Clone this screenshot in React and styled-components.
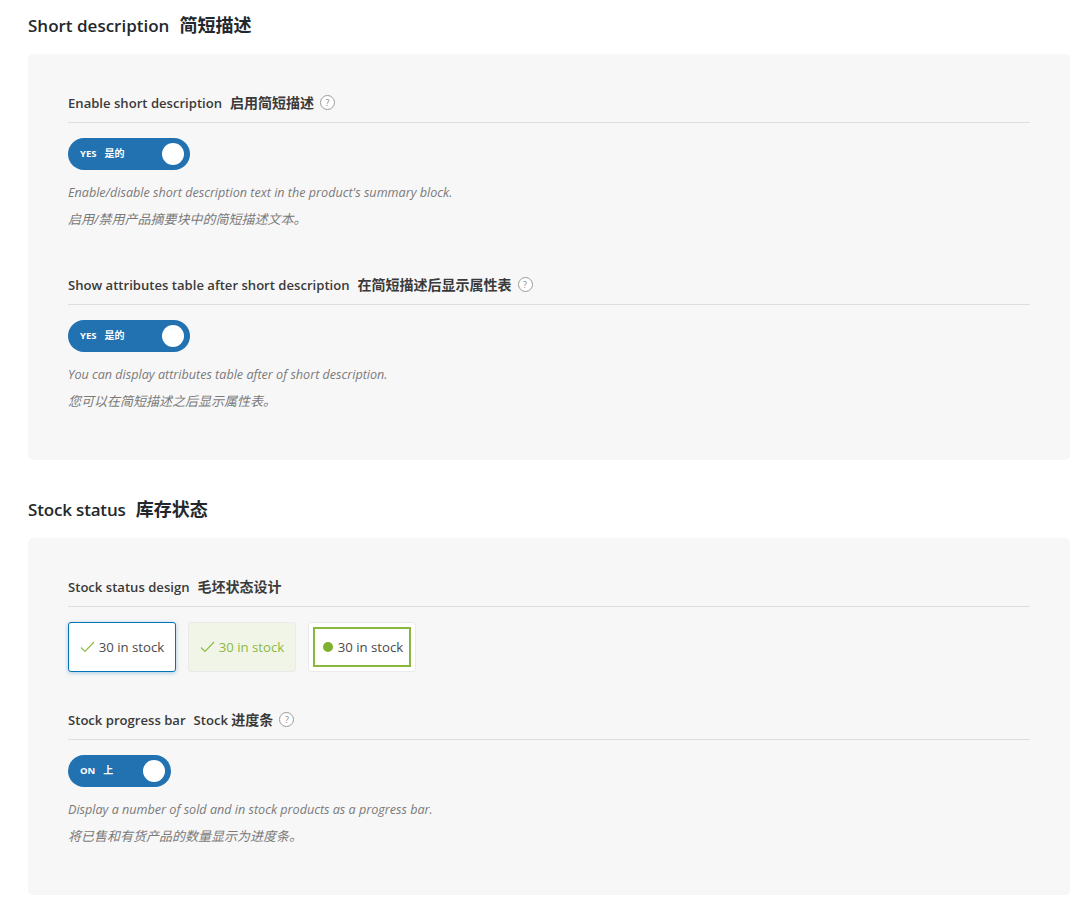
import React from 'react';
import styled, { createGlobalStyle } from 'styled-components';

const Global = createGlobalStyle`
  html, body { margin: 0; padding: 0; background: #fff; }
  body { font-family: "Open Sans", "Noto Sans CJK SC", sans-serif; }
`;
const Page = styled.div`
  padding: 14px 14px 21px 28px;
  display: flex;
  flex-direction: column;
`;
const SectionTitle = styled.h2`
  margin: 0 0 17px;
  height: 23px;
  line-height: 23px;
  display: flex;
  align-items: baseline;
  gap: 10px;
  font-size: 17px;
  font-weight: 600;
  letter-spacing: ${p => p.$tracking || 0}px;
  color: #23282d;
  white-space: pre;
`;
const SectionCjk = styled.span`
  font-size: 18px;
  letter-spacing: 0;
`;
const Panel = styled.section`
  background: #f7f7f7;
  border-radius: 5px;
  padding: 40px 40px ${p => p.$pb}px;
  margin-bottom: ${p => p.$mb}px;
  display: flex;
  flex-direction: column;
`;
const Field = styled.div`
  margin-bottom: ${p => p.$mb}px;
`;
const FieldHead = styled.div`
  display: flex;
  align-items: center;
  gap: 6px;
  height: 16px;
  padding-bottom: 12px;
  border-bottom: 1px solid #dedede;
  margin-bottom: 15px;
`;
const FieldTitle = styled.span`
  display: flex;
  align-items: baseline;
  gap: 8px;
  font-size: 13.1px;
  font-weight: 600;
  color: #3a3a3a;
  white-space: pre;
`;
const FieldCjk = styled.span`
  font-size: 14px;
`;
const HelpIcon = styled.span`
  width: 13px;
  height: 13px;
  border: 1px solid #9b9b9b;
  border-radius: 50%;
  background: #fff;
  color: #8a8a8a;
  font-size: 9px;
  line-height: 13px;
  text-align: center;
`;
const Toggle = styled.div`
  width: ${p => p.$w}px;
  height: 32px;
  box-sizing: border-box;
  border-radius: 16px;
  background: #2271b1;
  display: flex;
  align-items: center;
  padding: 0 6px 0 12px;
  margin-bottom: 13px;
`;
const ToggleText = styled.span`
  display: flex;
  align-items: baseline;
  gap: 8px;
  padding-bottom: 4px;
  font-size: 9.5px;
  font-weight: 700;
  color: #fff;
  white-space: pre;
`;
const ToggleCjk = styled.span`
  font-size: 10px;
`;
const Knob = styled.span`
  width: 22px;
  height: 22px;
  border-radius: 50%;
  background: #fff;
  margin-left: auto;
`;
const Desc = styled.p`
  margin: 0;
  height: 27px;
  line-height: ${p => (p.$cjk ? 18 : 20)}px;
  font-size: ${p => (p.$cjk ? 13 : 12.6)}px;
  font-style: italic;
  color: #7a7a7a;
`;
const Designs = styled.div`
  display: flex;
  gap: 12px;
`;
const Design = styled.div`
  width: 108px;
  height: 50px;
  box-sizing: border-box;
  border-radius: 3px;
  display: flex;
  align-items: center;
  justify-content: center;
  gap: 4px;
  font-size: 13.2px;
  color: ${p => (p.$green ? '#8abb45' : '#4a4a4a')};
  background: ${p => (p.$green ? '#f1f5e8' : '#fff')};
  border: 1px solid ${p => (p.$selected ? '#0075b8' : '#eaeaea')};
  box-shadow: ${p => (p.$selected ? '0 1px 4px rgba(0,115,170,.35)' : 'none')};
`;
const DotDesign = styled(Design)`
  padding: 4px;
`;
const DotInner = styled.div`
  flex: 1;
  align-self: stretch;
  border: 2px solid #8ab83f;
  padding-left: 2px;
  display: flex;
  align-items: center;
  justify-content: center;
  gap: 5px;
`;
const Dot = styled.span`
  width: 10px;
  height: 10px;
  border-radius: 50%;
  background: #7fb12f;
`;
const Check = () => (
  <svg width="15" height="12" viewBox="0 0 15 12" fill="none" stroke="#8abb45" strokeWidth="1.1">
    <path d="M1 6.5 L5 10.5 L14 1" />
  </svg>
);

export default function App() {
  return (
    <Page>
      <Global />
      <SectionTitle>Short description<SectionCjk>简短描述</SectionCjk></SectionTitle>
      <Panel $pb={41} $mb={38}>
        <Field $mb={39}>
          <FieldHead>
            <FieldTitle>Enable short description<FieldCjk>启用简短描述</FieldCjk></FieldTitle>
            <HelpIcon>?</HelpIcon>
          </FieldHead>
          <Toggle $w={122}><ToggleText>YES<ToggleCjk>是的</ToggleCjk></ToggleText><Knob /></Toggle>
          <Desc>Enable/disable short description text in the product's summary block.</Desc>
          <Desc $cjk>启用/禁用产品摘要块中的简短描述文本。</Desc>
        </Field>
        <Field $mb={0}>
          <FieldHead>
            <FieldTitle>Show attributes table after short description<FieldCjk>在简短描述后显示属性表</FieldCjk></FieldTitle>
            <HelpIcon>?</HelpIcon>
          </FieldHead>
          <Toggle $w={122}><ToggleText>YES<ToggleCjk>是的</ToggleCjk></ToggleText><Knob /></Toggle>
          <Desc>You can display attributes table after of short description.</Desc>
          <Desc $cjk>您可以在简短描述之后显示属性表。</Desc>
        </Field>
      </Panel>
      <SectionTitle $tracking={-0.17}>Stock status<SectionCjk>库存状态</SectionCjk></SectionTitle>
      <Panel $pb={41} $mb={0}>
        <Field $mb={39}>
          <FieldHead>
            <FieldTitle>Stock status design<FieldCjk>毛坯状态设计</FieldCjk></FieldTitle>
          </FieldHead>
          <Designs>
            <Design $selected><Check />30 in stock</Design>
            <Design $green><Check />30 in stock</Design>
            <DotDesign><DotInner><Dot />30 in stock</DotInner></DotDesign>
          </Designs>
        </Field>
        <Field $mb={0}>
          <FieldHead>
            <FieldTitle>Stock progress bar<span>Stock <FieldCjk>进度条</FieldCjk></span></FieldTitle>
            <HelpIcon>?</HelpIcon>
          </FieldHead>
          <Toggle $w={103}><ToggleText>ON<ToggleCjk>上</ToggleCjk></ToggleText><Knob /></Toggle>
          <Desc>Display a number of sold and in stock products as a progress bar.</Desc>
          <Desc $cjk>将已售和有货产品的数量显示为进度条。</Desc>
        </Field>
      </Panel>
    </Page>
  );
}
